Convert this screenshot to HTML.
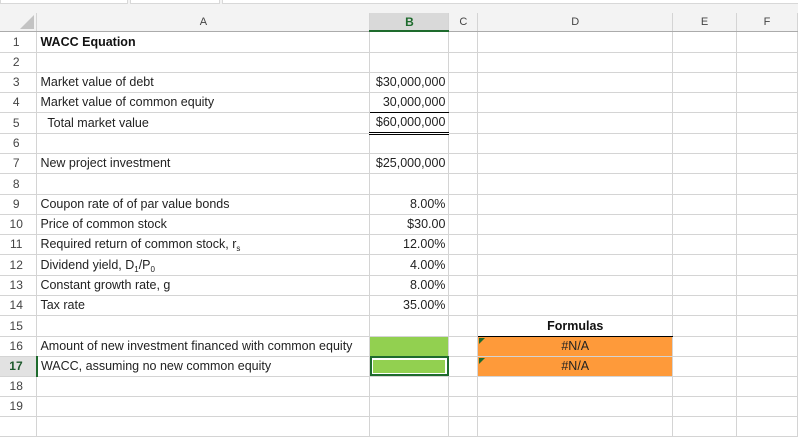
<!DOCTYPE html>
<html><head><style>
body{margin:0;width:798px;height:422px;overflow:hidden;background:#fff;font-family:"Liberation Sans",Arial,sans-serif;font-size:12.5px;color:#222;position:relative}
.strip{position:absolute;left:0;top:0;width:798px;height:13px;background:#f3f3f3}
.strip div{position:absolute;top:0;height:3px;background:#fff;border:1px solid #d8d8d8;border-top:none}
table{position:absolute;left:0;top:13px;border-collapse:collapse;table-layout:fixed}
td{border-right:1px solid #d4d4d4;border-bottom:1px solid #d4d4d4;padding:0 3px;white-space:nowrap;overflow:visible;line-height:14px}
tr.h td{background:#f3f3f3;height:15px;text-align:center;color:#444;font-size:11px;border-bottom:1px solid #ababab;border-right:1px solid #d4d4d4;padding-top:2px;line-height:13px}
td.rh{text-align:center;color:#444;padding:0 4px 0 0;font-size:12px}
.r{text-align:right}
.g{background:#92d050}
.o{background:#fe9a3a;text-align:center;position:relative}
.o:before{content:"";position:absolute;left:1px;top:1px;border-top:6px solid #1e6b2d;border-right:6px solid transparent}
sub{font-size:8px;vertical-align:baseline;position:relative;top:3px;line-height:0}
</style></head><body>
<div class="strip"><div style="left:0;width:126px"></div><div style="left:130px;width:88px"></div><div style="left:222px;width:576px"></div></div>
<table>
<colgroup><col style="width:37px"><col style="width:333px"><col style="width:79px"><col style="width:29px"><col style="width:195px"><col style="width:64px"><col style="width:61px"></colgroup>
<tr class="h"><td style="background:#f3f3f3;position:relative"><div style="position:absolute;right:2px;bottom:2px;border-bottom:14px solid #c3c3c3;border-left:14px solid transparent"></div></td><td>A</td><td style="background:#d9d9d9;color:#1e6b2d;font-weight:bold;font-size:12px;border-bottom:2px solid #1e6b2d">B</td><td>C</td><td>D</td><td>E</td><td>F</td></tr>
<tr style="height:21px"><td class="rh">1</td><td style="font-weight:bold;color:#111">WACC Equation</td><td></td><td></td><td></td><td></td><td></td></tr>
<tr style="height:20px"><td class="rh">2</td><td></td><td></td><td></td><td></td><td></td><td></td></tr>
<tr style="height:20px"><td class="rh">3</td><td>Market value of debt</td><td class="r">$30,000,000</td><td></td><td></td><td></td><td></td></tr>
<tr style="height:20px"><td class="rh">4</td><td>Market value of common equity</td><td class="r" style="border-bottom:1px solid #000">30,000,000</td><td></td><td></td><td></td><td></td></tr>
<tr style="height:21px"><td class="rh">5</td><td>&nbsp;&nbsp;Total market value</td><td class="r" style="border-bottom:3px double #000">$60,000,000</td><td></td><td></td><td></td><td></td></tr>
<tr style="height:20px"><td class="rh">6</td><td></td><td></td><td></td><td></td><td></td><td></td></tr>
<tr style="height:20px"><td class="rh">7</td><td>New project investment</td><td class="r">$25,000,000</td><td></td><td></td><td></td><td></td></tr>
<tr style="height:21px"><td class="rh">8</td><td></td><td></td><td></td><td></td><td></td><td></td></tr>
<tr style="height:20px"><td class="rh">9</td><td>Coupon rate of of par value bonds</td><td class="r">8.00%</td><td></td><td></td><td></td><td></td></tr>
<tr style="height:20px"><td class="rh">10</td><td>Price of common stock</td><td class="r">$30.00</td><td></td><td></td><td></td><td></td></tr>
<tr style="height:20px"><td class="rh">11</td><td>Required return of common stock, r<sub>s</sub></td><td class="r">12.00%</td><td></td><td></td><td></td><td></td></tr>
<tr style="height:21px"><td class="rh">12</td><td>Dividend yield, D<sub>1</sub>/P<sub>0</sub></td><td class="r">4.00%</td><td></td><td></td><td></td><td></td></tr>
<tr style="height:20px"><td class="rh">13</td><td>Constant growth rate, g</td><td class="r">8.00%</td><td></td><td></td><td></td><td></td></tr>
<tr style="height:20px"><td class="rh">14</td><td>Tax rate</td><td class="r">35.00%</td><td></td><td></td><td></td><td></td></tr>
<tr style="height:21px"><td class="rh">15</td><td></td><td></td><td></td><td style="text-align:center;font-weight:bold;color:#111;border-bottom:1px solid #000">Formulas</td><td></td><td></td></tr>
<tr style="height:20px"><td class="rh">16</td><td style="overflow:visible">Amount of new investment financed with common equity</td><td class="g"></td><td></td><td class="o">#N/A</td><td></td><td></td></tr>
<tr style="height:20px"><td class="rh" style="font-weight:bold;color:#1e5a2d;background:#e2e2e2;border-right:2px solid #1e6b2d">17</td><td>WACC, assuming no new common equity</td><td class="g" style="outline:2px solid #1e6b2d;outline-offset:-2px;box-shadow:inset 0 0 0 3px #fff"></td><td></td><td class="o">#N/A</td><td></td><td></td></tr>
<tr style="height:20px"><td class="rh">18</td><td></td><td></td><td></td><td></td><td></td><td></td></tr>
<tr style="height:20px"><td class="rh">19</td><td></td><td></td><td></td><td></td><td></td><td></td></tr>
<tr style="height:20px"><td class="rh"></td><td></td><td></td><td></td><td></td><td></td><td></td></tr>
</table>
</body></html>
